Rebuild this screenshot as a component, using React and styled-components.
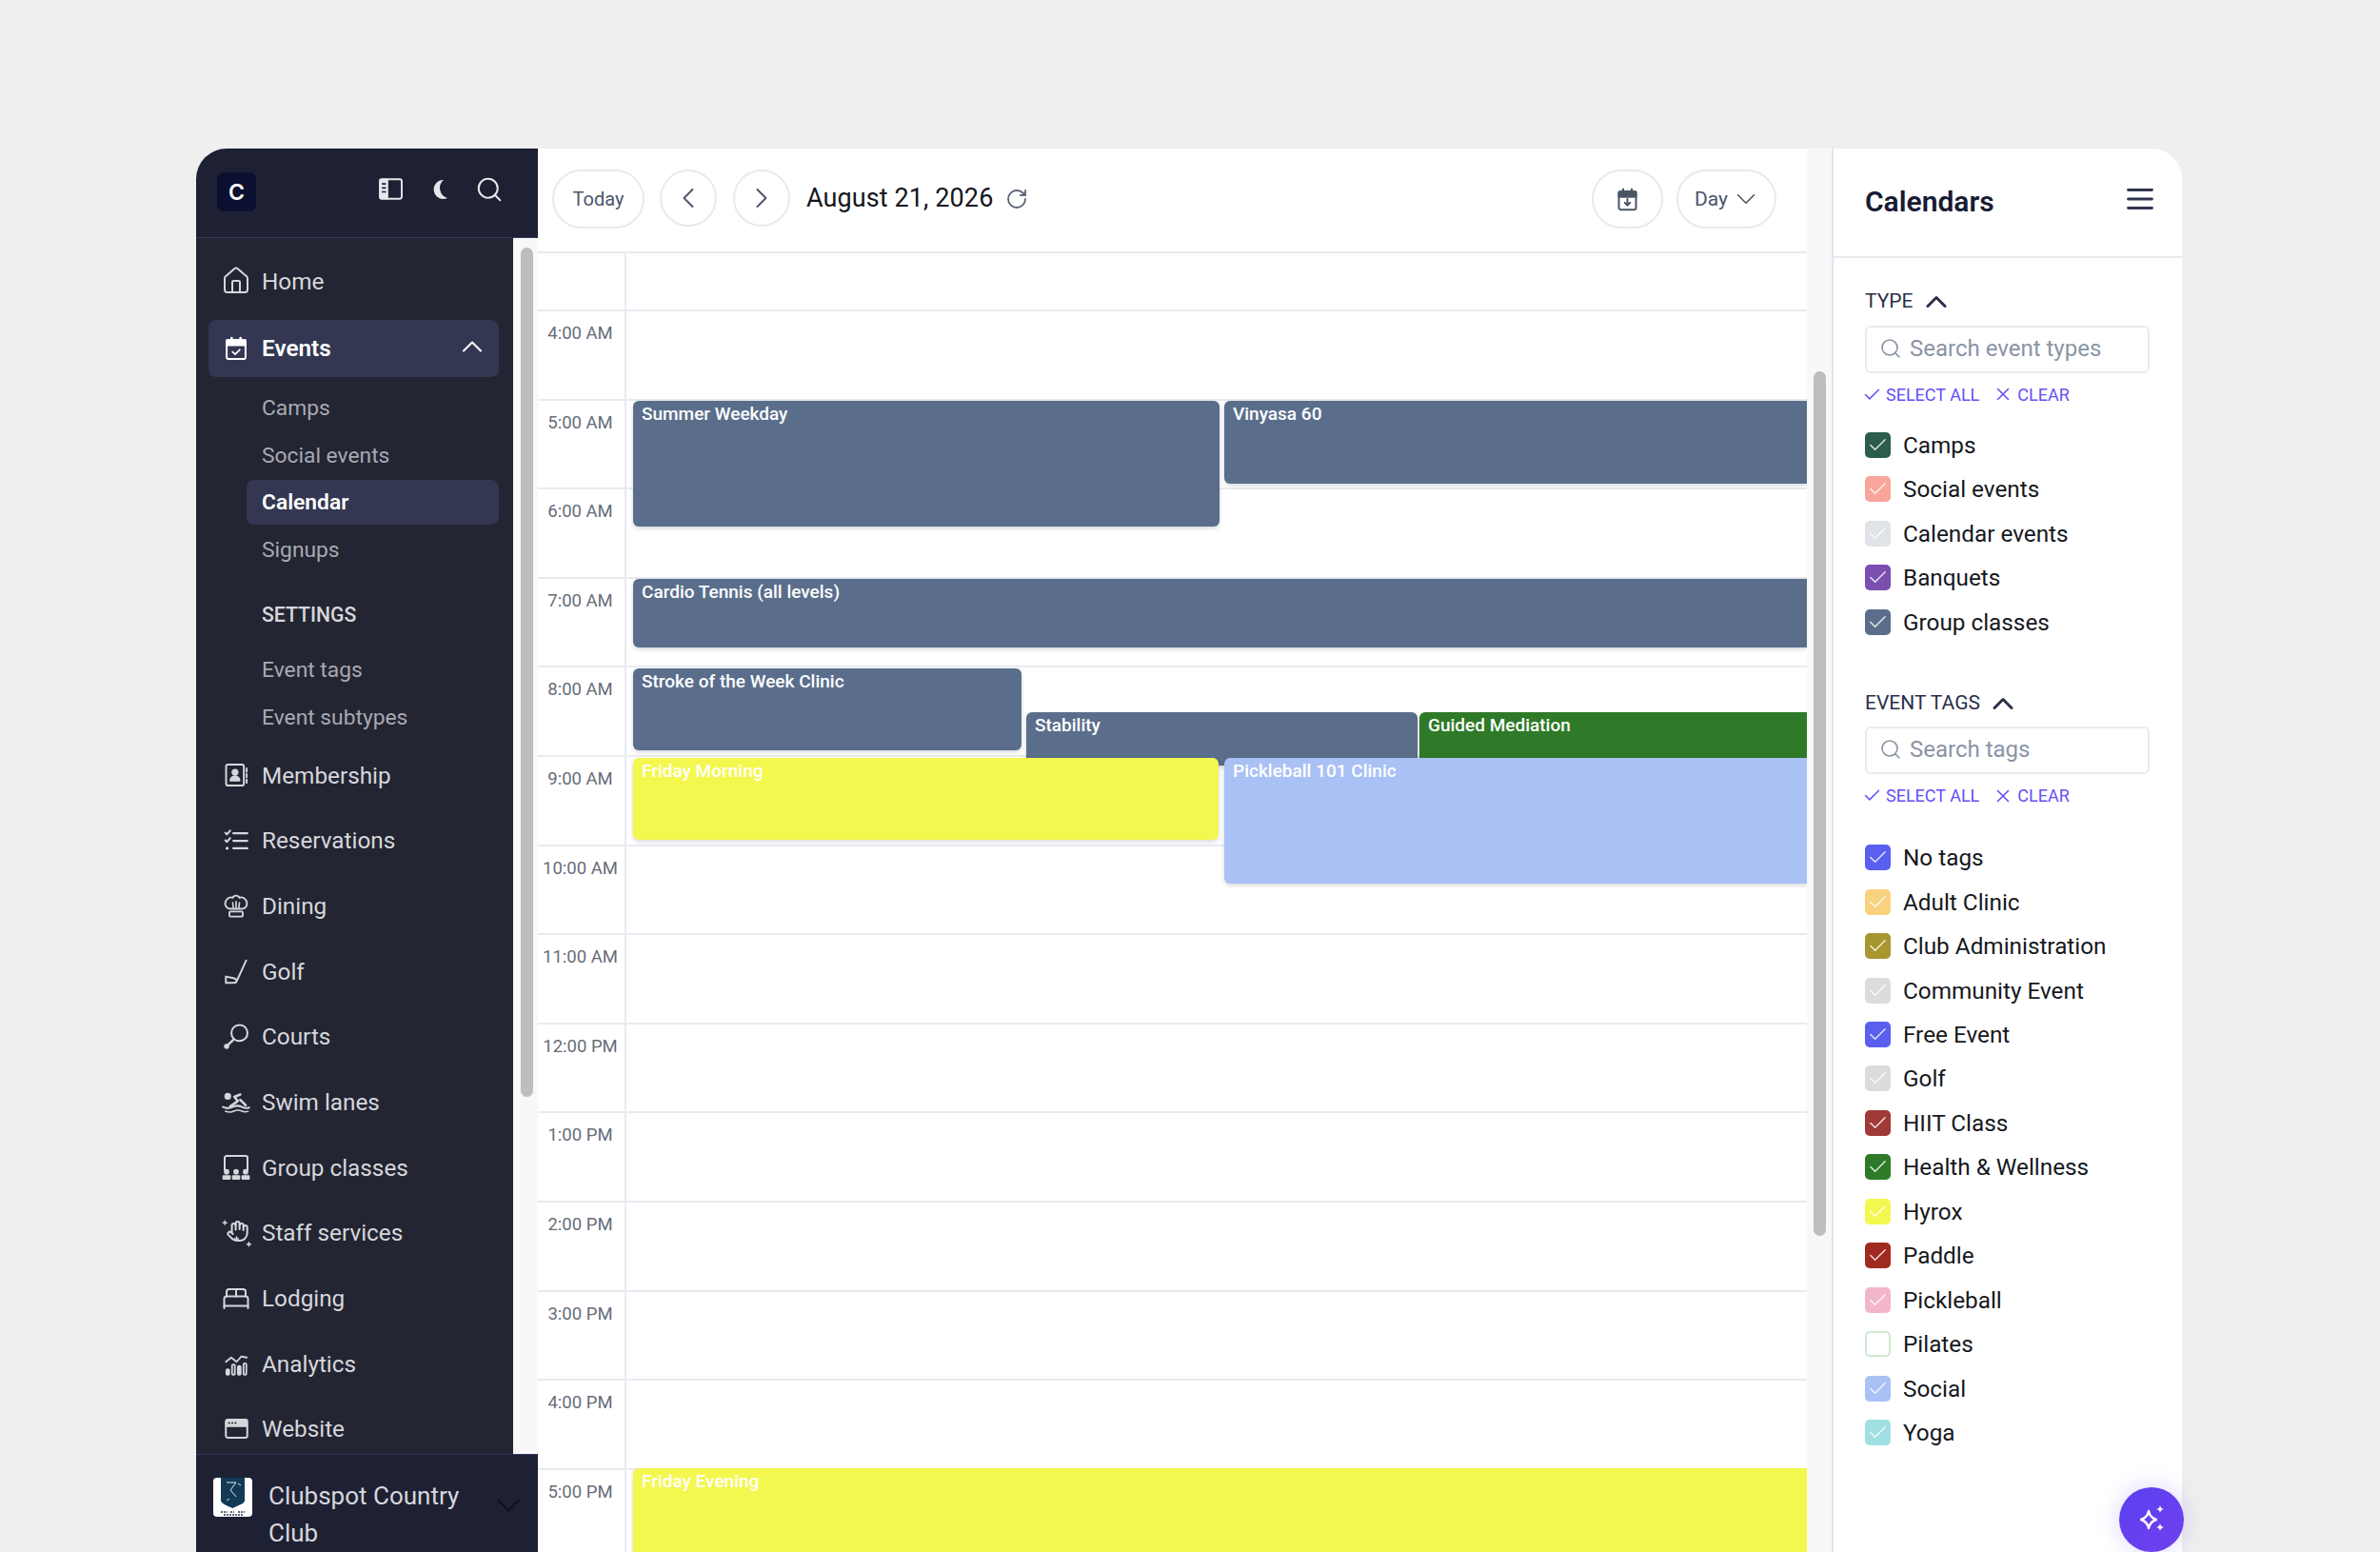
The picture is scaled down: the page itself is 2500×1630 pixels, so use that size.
import React from 'react'
import styled, { createGlobalStyle } from 'styled-components'
import {
  House,
  BedDouble,
  Search,
  ChevronUp,
  ChevronDown,
  ChevronLeft,
  ChevronRight,
  RotateCw,
  Check,
  X,
} from 'lucide-react'

const Global = createGlobalStyle`
  html, body { margin: 0; padding: 0; background: #efefef; overflow: hidden; }
  body { font-family: Roboto, "Liberation Sans", sans-serif; }
  * { box-sizing: border-box; }
`

const HOUR = 93.6
const ROW_START = 61

const Stage = styled.div`
  position: relative;
  width: 2086px;
  height: 1474px;
  margin: 156px 0 0 206px;
`
const Frame = styled.div`
  display: flex;
  width: 100%;
  height: 100%;
  border-radius: 32px 32px 0 0;
  overflow: hidden;
  background: #fff;
`

/* sidebar */
const Sidebar = styled.aside`
  display: flex;
  flex-direction: column;
  flex: 0 0 359px;
  height: 100%;
`
const SideHeader = styled.div`
  display: flex;
  align-items: center;
  flex: 0 0 94px;
  padding: 0 36px 8px 22px;
  background: #1e2133;
  border-bottom: 1px solid #33385a;
`
const LogoBox = styled.div`
  display: flex;
  align-items: center;
  justify-content: center;
  width: 41px;
  height: 41px;
  margin: 6px auto 0 0;
  border-radius: 7px;
  background: #0c1030;
  color: #fff;
  font-family: Inter, sans-serif;
  font-size: 23px;
  font-weight: 600;
`
const HeaderIcons = styled.div`
  display: flex;
  align-items: center;
  gap: 27px;
  color: #e6e7ec;
`
const SideMiddle = styled.div`
  display: flex;
  flex: 1;
  min-height: 0;
`
const Nav = styled.nav`
  flex: 0 0 333px;
  padding: 15px 15px 0 13px;
  overflow: hidden;
  background: #232532;
`
const Track = styled.div`
  position: relative;
  flex: 0 0 ${p => p.$width}px;
  background: #f8f8f8;
`
const Thumb = styled.div`
  position: absolute;
  left: ${p => p.$left}px;
  top: ${p => p.$top}px;
  width: 13px;
  height: ${p => p.$height}px;
  border-radius: 7px;
  background: #bdbdbd;
`
const NavRow = styled.div`
  display: flex;
  align-items: center;
  height: 60px;
  margin-bottom: ${p => p.$after ?? 8.7}px;
  padding: 0 18px 0 14px;
  border-radius: 8px;
  background: ${p => (p.$active ? '#333752' : 'transparent')};
  color: ${p => (p.$active ? '#fff' : '#d6d7dc')};
  font-size: 24.3px;
  font-weight: ${p => (p.$active ? 600 : 400)};
`
const NavIcon = styled.span`
  display: flex;
  align-items: center;
  justify-content: center;
  flex: 0 0 30px;
  width: 30px;
  min-width: 0;
  margin-right: 12px;
  svg { flex: none; }
`
const NavLabel = styled.span`
  flex: 1;
`
const NavChevron = styled(ChevronUp)`
  flex: none;
  margin: -3px -8px 0 0;
`
const SubList = styled.div`
  padding: 9.5px 0 5px 40px;
`
const SubRow = styled.div`
  display: flex;
  align-items: center;
  height: 47px;
  margin-bottom: 2.5px;
  padding-left: 16px;
  border-radius: 8px;
  background: ${p => (p.$active ? '#333752' : 'transparent')};
  color: ${p => (p.$active ? '#fff' : '#a8a9b2')};
  font-size: 22.8px;
  font-weight: ${p => (p.$active ? 600 : 400)};
`
const SubHeading = styled(SubRow)`
  margin: 21.5px 0 11px;
  color: #d6d7dc;
  font-size: 21.2px;
  font-weight: 500;
`
const SideFooter = styled.div`
  display: flex;
  align-items: flex-start;
  flex: 0 0 103px;
  padding: 24px 14px 0 18px;
  background: #1e2133;
  border-top: 1px solid #33385a;
  color: #d6d7dc;
  font-size: 26px;
  line-height: 39px;
`
const ClubLogo = styled.div`
  flex: 0 0 41px;
  height: 41px;
  margin-right: 17px;
  border-radius: 4px;
  background: #fff;
  overflow: hidden;
`
const ClubName = styled.div`
  flex: 1;
`
const FooterChevron = styled.div`
  display: flex;
  justify-content: center;
  flex: 0 0 28px;
  margin: 7px -5px 0 0;
  color: #0f1120;
  svg { flex: none; }
`

/* main */
const Main = styled.main`
  display: flex;
  flex-direction: column;
  flex: 0 0 1333px;
  min-width: 0;
`
const Toolbar = styled.div`
  display: flex;
  align-items: flex-start;
  flex: 0 0 110px;
  padding: 22px 32px 0 15px;
  border-bottom: 2px solid #e8ebf1;
`
const RoundButton = styled.button`
  display: flex;
  align-items: center;
  justify-content: center;
  gap: ${p => p.$inner || 0}px;
  width: ${p => p.$width}px;
  height: ${p => p.$height || 62}px;
  margin-right: ${p => p.$gap || 0}px;
  padding: 0 0 0 ${p => p.$pad || 0}px;
  border: 2px solid #e9e9f2;
  border-radius: 31px;
  background: #fff;
  color: #4c5568;
  font-family: inherit;
  font-size: ${p => p.$font || 20}px;
  svg { flex: none; }
`
const DateTitle = styled.div`
  margin-top: 14px;
  color: #14161c;
  font-size: 27px;
  letter-spacing: 0.1px;
`
const RefreshIcon = styled.span`
  display: flex;
  margin: 19px auto 0 13px;
  color: #5a6478;
`
const Grid = styled.div`
  position: relative;
  flex: 1;
  min-height: 0;
  overflow: hidden;
`
const AllDay = styled.div`
  display: flex;
  height: ${ROW_START}px;
  border-bottom: 2px solid #e8ebf1;
`
const HourRow = styled.div`
  display: flex;
  height: ${HOUR}px;
  border-bottom: 2px solid #e8ebf1;
`
const TimeCell = styled.div`
  flex: 0 0 93px;
  padding: 12px 2px 0 0;
  border-right: 2px solid #e8ebf1;
  color: #666d7a;
  font-size: 18.5px;
  line-height: 22px;
  text-align: center;
  white-space: nowrap;
`
const Event = styled.div`
  position: absolute;
  left: ${p => p.$x - 565}px;
  top: ${p => p.$y - 266}px;
  width: ${p => p.$w}px;
  height: ${p => p.$h}px;
  padding: 3px 9px;
  border-radius: ${p => (p.$open ? '6px 0 0 6px' : '6px')};
  background: ${p => p.$color};
  box-shadow: 0 2px 4px rgba(30, 40, 60, 0.18);
  color: #fff;
  font-size: 19px;
  font-weight: 500;
  line-height: 22px;
`

/* right panel */
const Panel = styled.aside`
  display: flex;
  flex: 1;
  flex-direction: column;
  border-left: 2px solid #dfe6f1;
`
const PanelHeader = styled.div`
  display: flex;
  align-items: flex-start;
  justify-content: space-between;
  flex: 0 0 115px;
  padding: 37px 30px 0 33px;
  border-bottom: 2px solid #e8ebf1;
  color: #171b33;
`
const PanelTitle = styled.div`
  font-size: 30px;
  font-weight: 600;
  line-height: 38px;
`
const MenuWrap = styled.div`
  display: flex;
  margin-top: 4px;
`
const PanelBody = styled.div`
  padding: 32px 34px 0 33px;
`
const SectionLabel = styled.div`
  display: flex;
  align-items: center;
  gap: 6px;
  height: 26px;
  margin-top: ${p => p.$top || 0}px;
  color: #2a2f4a;
  font-size: 21px;
  svg { flex: none; margin-top: 2px; }
`
const SearchBox = styled.div`
  display: flex;
  align-items: center;
  gap: 8px;
  height: 50px;
  margin-top: ${p => p.$top}px;
  padding: 0 0 2px 13px;
  border: 2px solid #e8ebf1;
  border-radius: 6px;
  color: #8a94a6;
  font-size: 24px;
  svg { flex: none; }
`
const Actions = styled.div`
  display: flex;
  align-items: center;
  gap: 17px;
  height: 24px;
  margin-top: ${p => p.$top}px;
`
const ActionLink = styled.span`
  display: flex;
  align-items: center;
  gap: 4px;
  color: #6451f5;
  font-size: 18px;
  svg { flex: none; margin-left: -3px; }
`
const CheckList = styled.div`
  margin-top: ${p => p.$top}px;
`
const CheckRow = styled.div`
  display: flex;
  align-items: center;
  height: ${p => p.$step}px;
  color: #16181d;
  font-size: 24.3px;
`
const Box = styled.span`
  display: flex;
  align-items: center;
  justify-content: center;
  flex: 0 0 27px;
  height: 27px;
  margin-right: 13px;
  border-radius: 5px;
  background: ${p => (p.$empty ? '#fff' : p.$color)};
  border: ${p => (p.$empty ? `2px solid ${p.$color}` : 'none')};
  color: rgba(255, 255, 255, 0.85);
  svg { flex: none; }
`
const Fab = styled.button`
  position: absolute;
  left: 2020px;
  top: 1406px;
  display: flex;
  align-items: center;
  justify-content: center;
  width: 68px;
  height: 68px;
  padding: 0;
  border: none;
  border-radius: 50%;
  background: linear-gradient(135deg, #5a3ff0, #7140ee);
  box-shadow: 0 0 24px rgba(90, 63, 240, 0.22);
  color: #fff;
`

/* drawn icons */
const Svg = ({ size = 26, children, ...rest }) => (
  <svg
    width={size}
    height={size}
    viewBox="0 0 24 24"
    fill="none"
    stroke="currentColor"
    strokeWidth="1.8"
    strokeLinecap="round"
    strokeLinejoin="round"
    {...rest}
  >
    {children}
  </svg>
)

const PanelToggleIcon = () => (
  <Svg size={29} strokeWidth="1.6">
    <rect x="2.5" y="3.5" width="19" height="17" rx="1.8" />
    <path d="M3 4h6v16H3z" fill="currentColor" />
    <path d="M4.8 7.5h2.4M4.8 11h2.4M4.8 14.5h2.4" stroke="#1e2133" strokeWidth="1.4" />
  </Svg>
)
const MoonIcon = () => (
  <Svg size={24} width={20} viewBox="0 0 20 24" stroke="none">
    <path d="M14 2A10 10 0 1 0 18 21A11 11 0 0 1 14 2z" fill="currentColor" />
  </Svg>
)
const CalendarCheckIcon = () => (
  <Svg size={28} strokeWidth="1.7">
    <rect x="3.5" y="4.5" width="17" height="17" rx="1.8" />
    <path d="M3.5 4.5h17v4.5h-17z" fill="currentColor" />
    <path d="M8 2.5v3M16 2.5v3" strokeWidth="2.2" />
    <path d="M8.8 15l2.3 2.3 4.2-4.2" strokeWidth="1.5" />
  </Svg>
)
const MembershipIcon = () => (
  <Svg size={28} strokeWidth="1.7">
    <rect x="3" y="2.5" width="16" height="19" rx="1.8" />
    <circle cx="11" cy="9.5" r="2.3" fill="currentColor" />
    <path d="M7 17c0-5 8-5 8 0z" fill="currentColor" />
    <path d="M21.5 6v3M21.5 11v3M21.5 16v3" strokeWidth="1.6" />
  </Svg>
)
const ReservationsIcon = () => (
  <Svg size={27} strokeWidth="1.8">
    <path d="M1.5 5l1.5 1.5L6 3M1.5 12l1.5 1.5L6 10" />
    <path d="M9 5.5h13M9 12.5h13M9 19.5h13" strokeWidth="2" />
    <path d="M3 19.5h.3" strokeWidth="2.6" />
  </Svg>
)
const DiningIcon = () => (
  <Svg size={28} strokeWidth="1.6">
    <path d="M7 15C3 15 1 11 3 7.5 4 5 7 4 9 5c1-2.5 5-2.5 6 0 2-1 5 0 6 2.5 2 3.5 0 7.5-4 7.5z" />
    <path d="M9 9.5l.5 4.5M12 8.5V14M15 9.5l-.5 4.5" strokeWidth="1.4" />
    <rect x="6" y="17.5" width="12" height="4.5" rx="1" />
  </Svg>
)
const GolfIcon = () => (
  <Svg size={27} strokeWidth="1.7">
    <path d="M21 1.5L12.5 20" />
    <path d="M2 16.5l7 1.5c2 .5 3 1.5 3 2.5 0 1-1 2-2.5 2H2z" />
  </Svg>
)
const RacketIcon = () => (
  <Svg size={29} strokeWidth="1.7">
    <circle cx="14.5" cy="9" r="7" />
    <path d="M9.5 14.5L4 20" strokeWidth="2" />
    <circle cx="3.3" cy="20.7" r="1.4" fill="currentColor" />
  </Svg>
)
const SwimIcon = () => (
  <Svg size={30} strokeWidth="1.7">
    <circle cx="5" cy="7.5" r="2" fill="currentColor" />
    <path d="M7 16l6.5-4.5L10.5 8l5-2" strokeWidth="2" />
    <path d="M15.5 10.5l4.5 4.5" strokeWidth="2" />
    <path d="M1 16.5c3 1.5 5 1.5 8 0s5-1.5 8 0 4 1 6 .5" />
    <path d="M3 20c2.5 1 5 1 7 0s5-1 7 0 3 .5 5 .3" strokeWidth="1.2" />
  </Svg>
)
const GroupIcon = () => (
  <Svg size={32} strokeWidth="1.5">
    <path d="M3 14V4.5A1.5 1.5 0 0 1 4.5 3h15A1.5 1.5 0 0 1 21 4.5V14" />
    <circle cx="4.5" cy="15.5" r="1.4" fill="currentColor" />
    <circle cx="12" cy="15.5" r="1.4" fill="currentColor" />
    <circle cx="19.5" cy="15.5" r="1.4" fill="currentColor" />
    <path d="M2 19h5v2H2zM9.5 19h5v2h-5zM17 19h5v2h-5z" fill="currentColor" />
  </Svg>
)
const StaffIcon = () => (
  <Svg size={31} strokeWidth="1.5">
    <g transform="translate(3.5 1.5) scale(.78)">
      <path d="M18 11V6a2 2 0 0 0-2-2a2 2 0 0 0-2 2" strokeWidth="2" />
      <path d="M14 10V4a2 2 0 0 0-2-2a2 2 0 0 0-2 2v2" strokeWidth="2" />
      <path d="M10 10.5V6a2 2 0 0 0-2-2a2 2 0 0 0-2 2v8" strokeWidth="2" />
      <path d="M18 8a2 2 0 1 1 4 0v6a8 8 0 0 1-8 8h-2c-2.8 0-4.5-.86-5.99-2.34l-3.6-3.6a2 2 0 0 1 2.83-2.82L7 15" strokeWidth="2" />
    </g>
    <path d="M2.5 2.5v3M1 4h3M22 20v3M20.5 21.5h3M12 15.5v3M10.5 17h3" strokeWidth="1.2" />
  </Svg>
)
const AnalyticsIcon = () => (
  <Svg size={27} strokeWidth="1.6">
    <path d="M2 10l5-4 5 4 4.5-5L21.5 6" />
    <rect x="2.5" y="17" width="2.6" height="5" rx="1" fill="currentColor" />
    <rect x="7.8" y="12.5" width="2.6" height="9.5" rx="1" />
    <rect x="13.2" y="14" width="2.6" height="8" rx="1" fill="currentColor" />
    <rect x="18.5" y="11.5" width="2.6" height="10.5" rx="1" />
  </Svg>
)
const WebsiteIcon = () => (
  <Svg size={27} strokeWidth="1.8">
    <rect x="2" y="3.5" width="20" height="17" rx="2" />
    <path d="M2.5 4h19v5.5h-19z" fill="currentColor" />
    <path d="M5 6.7h.1M8 6.7h.1M11 6.7h.1" stroke="#232532" strokeWidth="1.7" />
  </Svg>
)
const CalendarDownIcon = () => (
  <Svg size={27} strokeWidth="1.8">
    <rect x="4" y="4.5" width="16" height="17" rx="2" />
    <path d="M4 5h16v4.5H4z" fill="currentColor" />
    <path d="M8 2.5v3M16 2.5v3" strokeWidth="2" />
    <path d="M12 11.5v6M9.5 15l2.5 2.5 2.5-2.5" strokeWidth="1.8" />
  </Svg>
)
const MenuIcon = () => (
  <svg width="28" height="24" viewBox="0 0 28 24" fill="none" stroke="#30344f" strokeWidth="2.8" strokeLinecap="round">
    <path d="M1.5 2.5h25M1.5 12h25M1.5 21.5h25" />
  </svg>
)
const SparkIcon = () => (
  <svg width="32" height="32" viewBox="0 0 32 32" fill="none" stroke="currentColor" strokeWidth="2.4" strokeLinejoin="round">
    <path d="M13 7c1 5 3.5 7.5 8 9-4.5 1.5-7 4-8 9-1-5-3.5-7.5-8-9 4.5-1.5 7-4 8-9z" />
    <path d="M25 1c.5 2.5 1.5 3.5 4 4-2.5.5-3.5 1.5-4 4-.5-2.5-1.5-3.5-4-4 2.5-.5 3.5-1.5 4-4zM25 20c.5 2.5 1.5 3.5 4 4-2.5.5-3.5 1.5-4 4-.5-2.5-1.5-3.5-4-4 2.5-.5 3.5-1.5 4-4z" fill="currentColor" stroke="none" />
  </svg>
)
const ShieldLogo = () => (
  <svg width="41" height="41" viewBox="0 0 41 41">
    <path d="M8 0h25v24c0 3-6 5-12.5 8C14 29 8 27 8 24z" fill="#123a56" />
    <path d="M14 5h10l-6 8 6 7M26 6l3 2M14 24l3-2" fill="none" stroke="#dfe7ee" strokeWidth="1" />
    <path d="M8 36h7M18 36h4M26 36h7M11 39h20" stroke="#2b3a4a" strokeWidth="1.5" strokeDasharray="2 1" />
  </svg>
)

const mainNav = [
  { label: 'Membership', icon: <MembershipIcon /> },
  { label: 'Reservations', icon: <ReservationsIcon /> },
  { label: 'Dining', icon: <DiningIcon /> },
  { label: 'Golf', icon: <GolfIcon /> },
  { label: 'Courts', icon: <RacketIcon /> },
  { label: 'Swim lanes', icon: <SwimIcon /> },
  { label: 'Group classes', icon: <GroupIcon /> },
  { label: 'Staff services', icon: <StaffIcon /> },
  { label: 'Lodging', icon: <BedDouble size={30} strokeWidth={1.6} /> },
  { label: 'Analytics', icon: <AnalyticsIcon /> },
  { label: 'Website', icon: <WebsiteIcon /> },
]

const hours = [
  '4:00 AM', '5:00 AM', '6:00 AM', '7:00 AM', '8:00 AM', '9:00 AM', '10:00 AM', '11:00 AM',
  '12:00 PM', '1:00 PM', '2:00 PM', '3:00 PM', '4:00 PM', '5:00 PM',
]

const SLATE = '#5a6e8c'
const YELLOW = '#f4f74e'
const events = [
  { title: 'Summer Weekday', x: 665, y: 421, w: 616, h: 132, color: SLATE },
  { title: 'Vinyasa 60', x: 1286, y: 421, w: 612, h: 87, color: SLATE, open: true },
  { title: 'Cardio Tennis (all levels)', x: 665, y: 608, w: 1233, h: 72, color: SLATE, open: true },
  { title: 'Stroke of the Week Clinic', x: 665, y: 702, w: 408, h: 86, color: SLATE },
  { title: 'Stability', x: 1078, y: 748, w: 411, h: 56, color: SLATE },
  { title: 'Guided Mediation', x: 1491, y: 748, w: 407, h: 56, color: '#2e7a28', open: true },
  { title: 'Friday Morning', x: 665, y: 796, w: 615, h: 86, color: YELLOW },
  { title: 'Pickleball 101 Clinic', x: 1286, y: 796, w: 612, h: 132, color: '#a9c1f4', open: true },
  { title: 'Friday Evening', x: 665, y: 1542, w: 1233, h: 120, color: YELLOW, open: true },
]

const types = [
  ['Camps', '#2a5d4a'],
  ['Social events', '#f9a59a'],
  ['Calendar events', '#e0e4e8'],
  ['Banquets', '#7a4fb0'],
  ['Group classes', SLATE],
]

const tags = [
  ['No tags', '#5a5ff0'],
  ['Adult Clinic', '#f9d27e'],
  ['Club Administration', '#a8962e'],
  ['Community Event', '#dcdcdc'],
  ['Free Event', '#5a5ff0'],
  ['Golf', '#dcdcdc'],
  ['HIIT Class', '#a03a36'],
  ['Health & Wellness', '#2e7a28'],
  ['Hyrox', YELLOW],
  ['Paddle', '#a02a20'],
  ['Pickleball', '#f4b6cc'],
  ['Pilates', '#cfe8cf', true],
  ['Social', '#a9c1f4'],
  ['Yoga', '#a0e0e4'],
]

const FilterActions = ({ top }) => (
  <Actions $top={top}>
    <ActionLink>
      <Check size={21} strokeWidth={1.7} />
      SELECT ALL
    </ActionLink>
    <ActionLink>
      <X size={22} strokeWidth={1.7} />
      CLEAR
    </ActionLink>
  </Actions>
)

const FilterList = ({ items, top, step }) => (
  <CheckList $top={top}>
    {items.map(([label, color, empty]) => (
      <CheckRow key={label} $step={step}>
        <Box $color={color} $empty={empty}>
          {!empty && <Check size={23} strokeWidth={1.5} />}
        </Box>
        {label}
      </CheckRow>
    ))}
  </CheckList>
)

export default function App() {
  return (
    <>
      <Global />
      <Stage>
        <Frame>
          <Sidebar>
            <SideHeader>
              <LogoBox>C</LogoBox>
              <HeaderIcons>
                <PanelToggleIcon />
                <MoonIcon />
                <Search size={30} strokeWidth={1.6} />
              </HeaderIcons>
            </SideHeader>
            <SideMiddle>
              <Nav>
                <NavRow $after={10.5}>
                  <NavIcon><House size={32} strokeWidth={1.5} /></NavIcon>
                  <NavLabel>Home</NavLabel>
                </NavRow>
                <NavRow $active $after={0}>
                  <NavIcon><CalendarCheckIcon /></NavIcon>
                  <NavLabel>Events</NavLabel>
                  <NavChevron size={36} strokeWidth={1.4} />
                </NavRow>
                <SubList>
                  <SubRow>Camps</SubRow>
                  <SubRow>Social events</SubRow>
                  <SubRow $active>Calendar</SubRow>
                  <SubRow>Signups</SubRow>
                  <SubHeading>SETTINGS</SubHeading>
                  <SubRow>Event tags</SubRow>
                  <SubRow>Event subtypes</SubRow>
                </SubList>
                {mainNav.map(item => (
                  <NavRow key={item.label}>
                    <NavIcon>{item.icon}</NavIcon>
                    <NavLabel>{item.label}</NavLabel>
                  </NavRow>
                ))}
              </Nav>
              <Track $width={26}>
                <Thumb $left={8} $top={10} $height={892} />
              </Track>
            </SideMiddle>
            <SideFooter>
              <ClubLogo><ShieldLogo /></ClubLogo>
              <ClubName>Clubspot Country Club</ClubName>
              <FooterChevron><ChevronDown size={44} strokeWidth={1.2} /></FooterChevron>
            </SideFooter>
          </Sidebar>

          <Main>
            <Toolbar>
              <RoundButton $width={97} $gap={16}>Today</RoundButton>
              <RoundButton $width={60} $height={60} $gap={17}><ChevronLeft size={36} strokeWidth={1.3} /></RoundButton>
              <RoundButton $width={60} $height={60} $gap={17}><ChevronRight size={36} strokeWidth={1.3} /></RoundButton>
              <DateTitle>August 21, 2026</DateTitle>
              <RefreshIcon><RotateCw size={24} strokeWidth={1.8} /></RefreshIcon>
              <RoundButton $width={75} $gap={14}><CalendarDownIcon /></RoundButton>
              <RoundButton $width={105} $font={21} $inner={2} $pad={4}>
                Day
                <ChevronDown size={34} strokeWidth={1.1} />
              </RoundButton>
            </Toolbar>
            <Grid>
              <AllDay><TimeCell /></AllDay>
              {hours.map(hour => (
                <HourRow key={hour}>
                  <TimeCell>{hour}</TimeCell>
                </HourRow>
              ))}
              {events.map(ev => (
                <Event
                  key={ev.title}
                  $x={ev.x}
                  $y={ev.y}
                  $w={ev.w}
                  $h={ev.h}
                  $color={ev.color}
                  $open={ev.open}
                >
                  {ev.title}
                </Event>
              ))}
            </Grid>
          </Main>

          <Track $width={26}>
            <Thumb $left={7} $top={234} $height={908} />
          </Track>

          <Panel>
            <PanelHeader>
              <PanelTitle>Calendars</PanelTitle>
              <MenuWrap><MenuIcon /></MenuWrap>
            </PanelHeader>
            <PanelBody>
              <SectionLabel>
                TYPE
                <ChevronUp size={36} strokeWidth={2} />
              </SectionLabel>
              <SearchBox $top={13}>
                <Search size={24} strokeWidth={1.6} />
                Search event types
              </SearchBox>
              <FilterActions top={10} />
              <FilterList items={types} top={18} step={46.5} />
              <SectionLabel $top={48}>
                EVENT TAGS
                <ChevronUp size={36} strokeWidth={2} />
              </SectionLabel>
              <SearchBox $top={12}>
                <Search size={24} strokeWidth={1.6} />
                Search tags
              </SearchBox>
              <FilterActions top={11} />
              <FilterList items={tags} top={30} step={46.46} />
            </PanelBody>
          </Panel>
        </Frame>
        <Fab><SparkIcon /></Fab>
      </Stage>
    </>
  )
}
